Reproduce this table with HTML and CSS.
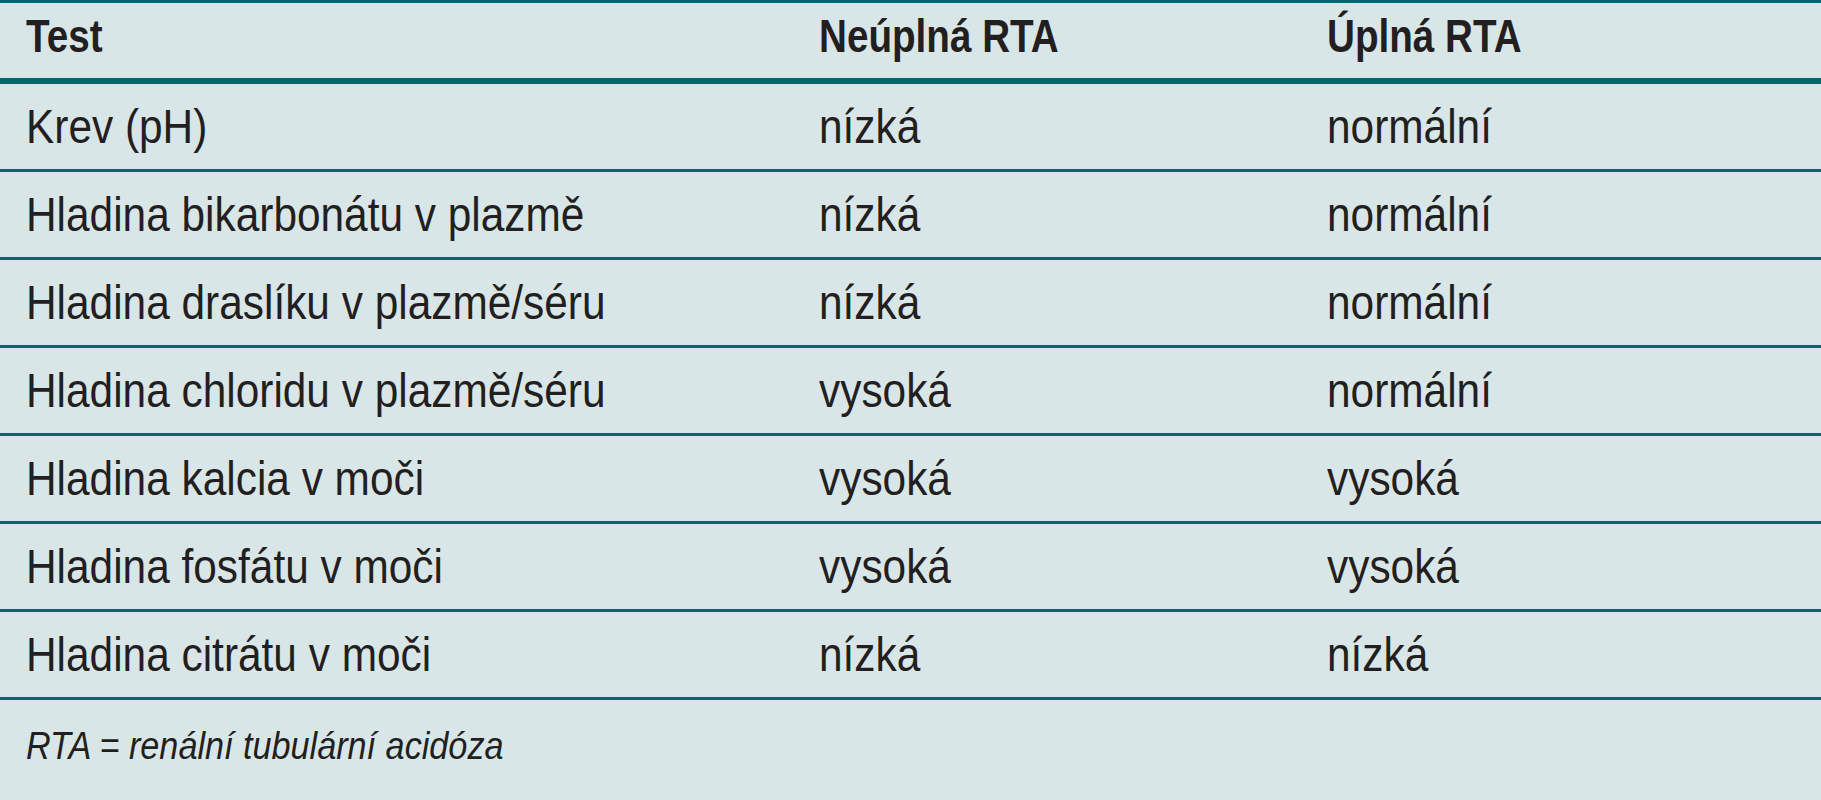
FILE: index.html
```html
<!DOCTYPE html>
<html lang="cs">
<head>
<meta charset="utf-8">
<title>RTA</title>
<link rel="stylesheet" href="styles.css">
</head>
<body>
<div class="tbl">
  <div class="row head">
    <div>Test</div>
    <div>Neúplná RTA</div>
    <div>Úplná RTA</div>
  </div>
  <div class="row">
    <div>Krev (pH)</div>
    <div>nízká</div>
    <div>normální</div>
  </div>
  <div class="row">
    <div>Hladina bikarbonátu v plazmě</div>
    <div>nízká</div>
    <div>normální</div>
  </div>
  <div class="row">
    <div>Hladina draslíku v plazmě/séru</div>
    <div>nízká</div>
    <div>normální</div>
  </div>
  <div class="row">
    <div>Hladina chloridu v plazmě/séru</div>
    <div>vysoká</div>
    <div>normální</div>
  </div>
  <div class="row">
    <div>Hladina kalcia v moči</div>
    <div>vysoká</div>
    <div>vysoká</div>
  </div>
  <div class="row">
    <div>Hladina fosfátu v moči</div>
    <div>vysoká</div>
    <div>vysoká</div>
  </div>
  <div class="row">
    <div>Hladina citrátu v moči</div>
    <div>nízká</div>
    <div>nízká</div>
  </div>
  <div class="note">RTA = renální tubulární acidóza</div>
</div>
</body>
</html>
```
FILE: styles.css
```css
html, body {
  margin: 0;
  padding: 0;
  background: #d9e6e8;
}
.tbl {
  width: 1821px;
  height: 800px;
  background: #d9e6e8;
  color: #231f20;
  font-family: "Liberation Sans", Arial, sans-serif;
  overflow: hidden;
}
.row {
  display: grid;
  grid-template-columns: 793px 508px 1fr;
  align-items: center;
  height: 85px;
  border-bottom: 3px solid #00666f;
  font-size: 49px;
  line-height: 1;
}
.row > div {
  padding-left: 26px;
  white-space: nowrap;
  transform: scaleX(0.865);
  transform-origin: 26px 50%;
}
.row.head {
  height: 66px;
  padding-bottom: 9px;
  border-top: 3px solid #00666f;
  border-bottom: 6px solid #00666f;
  font-size: 46px;
  font-weight: bold;
}
.row.head > div {
  transform: scaleX(0.84);
}
.note {
  padding: 27px 0 0 26px;
  font-size: 38px;
  line-height: 1;
  font-style: italic;
  white-space: nowrap;
  transform: scaleX(0.9);
  transform-origin: 26px 50%;
}
```
